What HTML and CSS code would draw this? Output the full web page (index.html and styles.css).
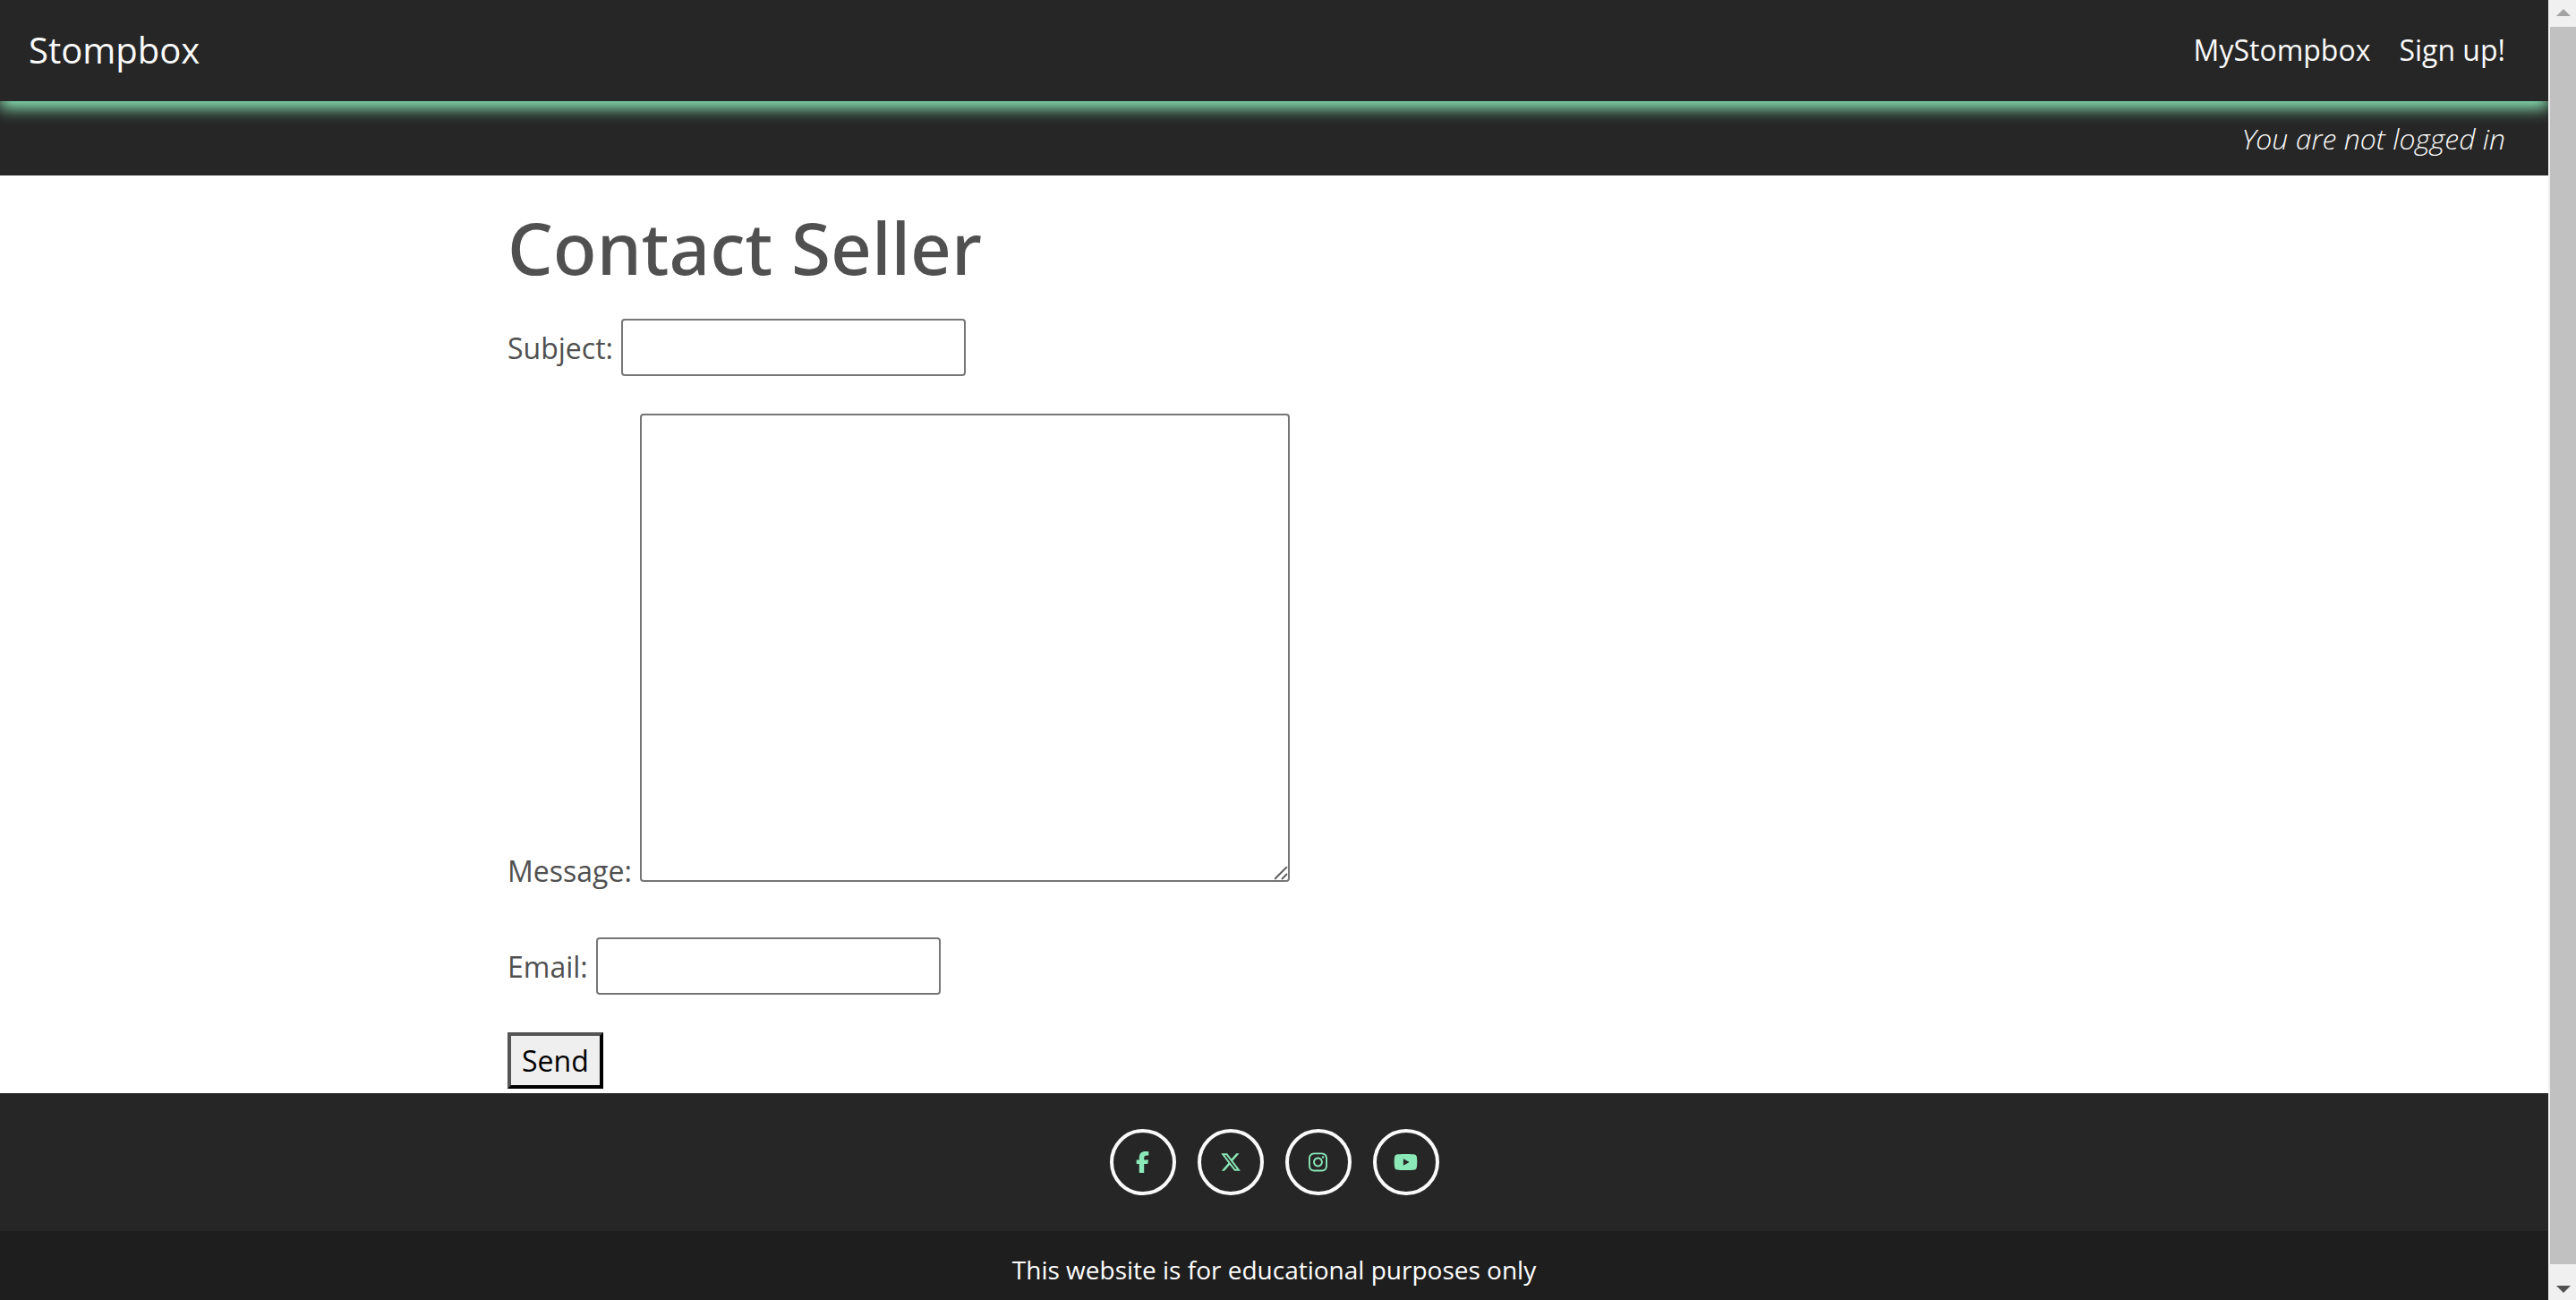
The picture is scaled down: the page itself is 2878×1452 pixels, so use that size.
FILE: index.html
```html
<!DOCTYPE html>
<html lang="en">
<head>
<meta charset="utf-8">
<title>Stompbox</title>
<link rel="stylesheet" href="styles.css">
</head>
<body>
<div class="page">
  <header class="navbar">
    <a class="brand" href="#">Stompbox</a>
    <nav class="nav-links">
      <a href="#">MyStompbox</a>
      <a href="#">Sign up!</a>
    </nav>
  </header>
  <div class="status">You are not logged in</div>
  <main class="content">
    <h1>Contact Seller</h1>
    <form class="contact-form">
      <div class="field">
        <label for="subject">Subject:</label>
        <input class="text-box" id="subject" type="text">
      </div>
      <div class="field field-message">
        <label for="message">Message:</label>
        <textarea class="text-area" id="message"></textarea>
      </div>
      <div class="field">
        <label for="email">Email:</label>
        <input class="text-box" id="email" type="email">
      </div>
      <button class="send" type="submit">Send</button>
    </form>
  </main>
  <footer class="footer">
    <div class="social">
      <a href="#" aria-label="Facebook"><svg width="15" height="24" viewBox="0 0 320 512"><path d="M80 299.3V512H196V299.3h86.5l18-97.8H196V166.9c0-51.7 20.3-71.5 72.7-71.5c16.3 0 29.4 .4 37 1.2V7.9C291.4 4 256.4 0 236.2 0C129.3 0 80 50.5 80 159.4v42.1H14v97.8H80z"/></svg></a>
      <a href="#" aria-label="X"><svg width="24" height="24" viewBox="0 0 512 512"><path d="M389.2 48h70.6L305.6 224.2 487 464H345L233.7 318.6 106.5 464H35.8L200.7 275.5 26.8 48H172.4L272.9 180.9 389.2 48zM364.4 421.8h39.1L151.1 88h-42L364.4 421.8z"/></svg></a>
      <a href="#" aria-label="Instagram"><svg width="21" height="24" viewBox="0 0 448 512"><path d="M224.1 141c-63.6 0-114.9 51.3-114.9 114.9s51.3 114.9 114.9 114.9S339 319.5 339 255.9 287.7 141 224.1 141zm0 189.6c-41.1 0-74.7-33.5-74.7-74.7s33.5-74.7 74.7-74.7 74.7 33.5 74.7 74.7-33.6 74.7-74.7 74.7zm146.4-194.3c0 14.9-12 26.8-26.8 26.8-14.9 0-26.8-12-26.8-26.8s12-26.8 26.8-26.8 26.8 12 26.8 26.8zm76.1 27.2c-1.7-35.9-9.9-67.7-36.2-93.9-26.2-26.2-58-34.4-93.9-36.2-37-2.1-147.9-2.1-184.9 0-35.8 1.7-67.6 9.9-93.9 36.1s-34.4 58-36.2 93.9c-2.1 37-2.1 147.9 0 184.9 1.7 35.9 9.9 67.7 36.2 93.9s58 34.4 93.9 36.2c37 2.1 147.9 2.1 184.9 0 35.9-1.7 67.7-9.9 93.9-36.2 26.2-26.2 34.4-58 36.2-93.9 2.1-37 2.1-147.8 0-184.8zM398.8 388c-7.8 19.6-22.9 34.7-42.6 42.6-29.5 11.7-99.5 9-132.1 9s-102.7 2.6-132.1-9c-19.6-7.8-34.7-22.9-42.6-42.6-11.7-29.5-9-99.5-9-132.1s-2.6-102.7 9-132.1c7.8-19.6 22.9-34.7 42.6-42.6 29.5-11.7 99.5-9 132.1-9s102.7-2.6 132.1 9c19.6 7.8 34.7 22.9 42.6 42.6 11.7 29.5 9 99.5 9 132.1s2.7 102.7-9 132.1z"/></svg></a>
      <a href="#" aria-label="YouTube"><svg width="27" height="24" viewBox="0 0 576 512"><path d="M549.655 124.083c-6.281-23.65-24.787-42.276-48.284-48.597C458.781 64 288 64 288 64S117.22 64 74.629 75.486c-23.497 6.322-42.003 24.947-48.284 48.597-11.412 42.867-11.412 132.305-11.412 132.305s0 89.438 11.412 132.305c6.281 23.65 24.787 41.5 48.284 47.821C117.22 448 288 448 288 448s170.78 0 213.371-11.486c23.497-6.321 42.003-24.171 48.284-47.821 11.412-42.867 11.412-132.305 11.412-132.305s0-89.438-11.412-132.305zm-317.51 213.508V175.185l142.739 81.205-142.739 81.201z"/></svg></a>
    </div>
    <p class="notice">This website is for educational purposes only</p>
  </footer>
</div>
<div class="scrollbar" aria-hidden="true">
  <svg class="arrow" width="16" height="8" viewBox="0 0 16 8"><path fill="#a3a3a3" d="M0 8L8 0l8 8z"/></svg>
  <div class="thumb"></div>
  <svg class="arrow" width="16" height="8" viewBox="0 0 16 8"><path fill="#505050" d="M0 0h16L8 8z"/></svg>
</div>
</body>
</html>
```
FILE: styles.css
```css
* { box-sizing: border-box; }

body {
  margin: 0;
  display: grid;
  grid-template-columns: minmax(0, 1fr) 31px;
  min-height: 100vh;
  font: 400 32px/48px "Open Sans", "Noto Sans", sans-serif;
  color: #505050;
  background: #fff;
}

a { color: inherit; text-decoration: none; }

.page {
  display: flex;
  flex-direction: column;
  overflow: hidden;
}

.navbar {
  position: relative;
  z-index: 1;
  display: flex;
  align-items: center;
  justify-content: space-between;
  height: 113px;
  padding: 0 48px 2px 32px;
  background: #262626;
  color: #fafafa;
  box-shadow: 0 8px 16px #8be8b8;
}

.brand { font-size: 40px; }

.nav-links { display: flex; gap: 32px; }

.status {
  padding: 18px 48px 17px;
  background: #262626;
  color: #fafafa;
  font-style: italic;
  font-weight: 300;
  text-align: right;
}

.content {
  width: 100%;
  max-width: 1713px;
  margin: 0 auto;
  padding: 32px 0 5px;
}

h1 {
  margin: 0 0 32px;
  font-family: "Noto Sans", "Open Sans", sans-serif;
  font-size: 80px;
  line-height: 96px;
  font-weight: 500;
}

.contact-form {
  display: flex;
  flex-direction: column;
  align-items: flex-start;
  gap: 42px;
}

.field {
  display: flex;
  align-items: baseline;
  gap: 9px;
}

.field-message {
  align-items: flex-end;
  padding-bottom: 8px;
}

.text-box,
.text-area {
  margin: 0;
  border: 2px solid #767676;
  border-radius: 4px;
  background: #fff;
  font: inherit;
}

.text-box {
  width: 385px;
  height: 64px;
  padding: 2px 4px;
}

.text-area {
  width: 726px;
  height: 523px;
  margin-bottom: 12px;
  padding: 4px;
  resize: both;
}

.text-area::-webkit-resizer {
  background: url("data:image/svg+xml,%3Csvg xmlns='http://www.w3.org/2000/svg' viewBox='0 0 15 15'%3E%3Cpath d='M0 14L14 0M8 14l6-6' stroke='%23606060' stroke-width='2'/%3E%3C/svg%3E") no-repeat;
}

.send {
  height: 63px;
  padding: 0 12px;
  border: 4px solid;
  border-color: #555 #000 #000 #555;
  background: #efefef;
  color: #000;
  font: inherit;
}

.footer {
  flex: 1;
  display: flex;
  flex-direction: column;
  background: #262626;
  color: #fff;
  text-align: center;
}

.social {
  display: flex;
  justify-content: center;
  gap: 24px;
  padding: 40px 0;
}

.social a {
  display: flex;
  align-items: center;
  justify-content: center;
  width: 74px;
  height: 74px;
  border: 4px solid #fafafa;
  border-radius: 50%;
}

.social svg { fill: #8be8b8; }

.notice {
  flex: 1;
  margin: 0;
  padding-top: 22px;
  background: #1e1e1e;
  font-size: 28px;
  line-height: 42px;
}

.scrollbar {
  display: flex;
  flex-direction: column;
  padding-left: 2px;
  background: #f0f0f0;
}

.arrow { margin: 10px auto 12px 7px; }

.thumb {
  flex: 1;
  margin-bottom: 14px;
  background: #c1c1c1;
}

.thumb + .arrow { margin-bottom: 8px; }
```
